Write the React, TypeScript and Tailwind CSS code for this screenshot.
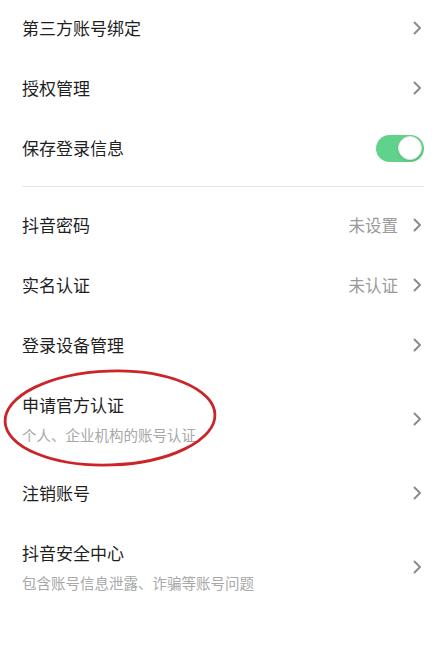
import type { ReactNode } from "react"

const font = { fontFamily: '"Noto Sans CJK SC", "Noto Sans", sans-serif' }

function Chevron() {
  return (
    <svg width="16" height="16" viewBox="0 0 16 16" className="shrink-0" aria-hidden="true">
      <path d="M6.5 2.5 L12 8 L6.5 13.5" fill="none" stroke="#8c8c8c" strokeWidth="2" strokeLinecap="round" strokeLinejoin="round" />
    </svg>
  )
}

function Toggle() {
  return (
    <div className="w-[48px] h-[27px] rounded-full bg-[#5fd38b] flex items-center justify-end pr-[2px]">
      <div className="w-[24px] h-[24px] rounded-full bg-white border border-[#e2e2e2] shadow-sm" />
    </div>
  )
}

function Row({
  title,
  sub,
  value,
  right,
  tall,
}: {
  title: string
  sub?: string
  value?: string
  right?: ReactNode
  tall?: boolean
}) {
  return (
    <div className={`flex items-center justify-between ${tall ? "h-[88px]" : "h-[60px]"}`}>
      <div className="flex flex-col">
        <span className="text-[17px] leading-[24px] text-[#1f1f1f]">{title}</span>
        {sub && <span className="mt-[8px] text-[14.5px] leading-[20px] text-[#a8a8a8]">{sub}</span>}
      </div>
      {right ?? (
        <div className="flex items-center gap-[10px]">
          {value && <span className="text-[16.5px] text-[#9a9a9a]">{value}</span>}
          <Chevron />
        </div>
      )}
    </div>
  )
}

export default function App() {
  return (
    <div className="w-[448px] h-[664px] bg-white relative overflow-hidden" style={font}>
      <div className="pl-[22px] pr-[24px] -mt-[2px]">
        <Row title="第三方账号绑定" />
        <Row title="授权管理" />
        <Row title="保存登录信息" right={<Toggle />} />
        <div className="mt-[8px] h-px bg-[#e6e6e6]" />
        <div className="pt-[8px]">
          <Row title="抖音密码" value="未设置" />
          <Row title="实名认证" value="未认证" />
          <Row title="登录设备管理" />
          <Row title="申请官方认证" sub="个人、企业机构的账号认证" tall />
          <Row title="注销账号" />
          <Row title="抖音安全中心" sub="包含账号信息泄露、诈骗等账号问题" tall />
        </div>
      </div>

      {/* hand-drawn annotation circle */}
      <svg className="absolute left-0 top-[366px] pointer-events-none" width="224" height="104" viewBox="0 0 224 104" aria-hidden="true">
        <ellipse cx="110" cy="52" rx="105" ry="47" fill="none" stroke="#cc2529" strokeWidth="2.8" transform="rotate(-2 110 52)" />
      </svg>
    </div>
  )
}
